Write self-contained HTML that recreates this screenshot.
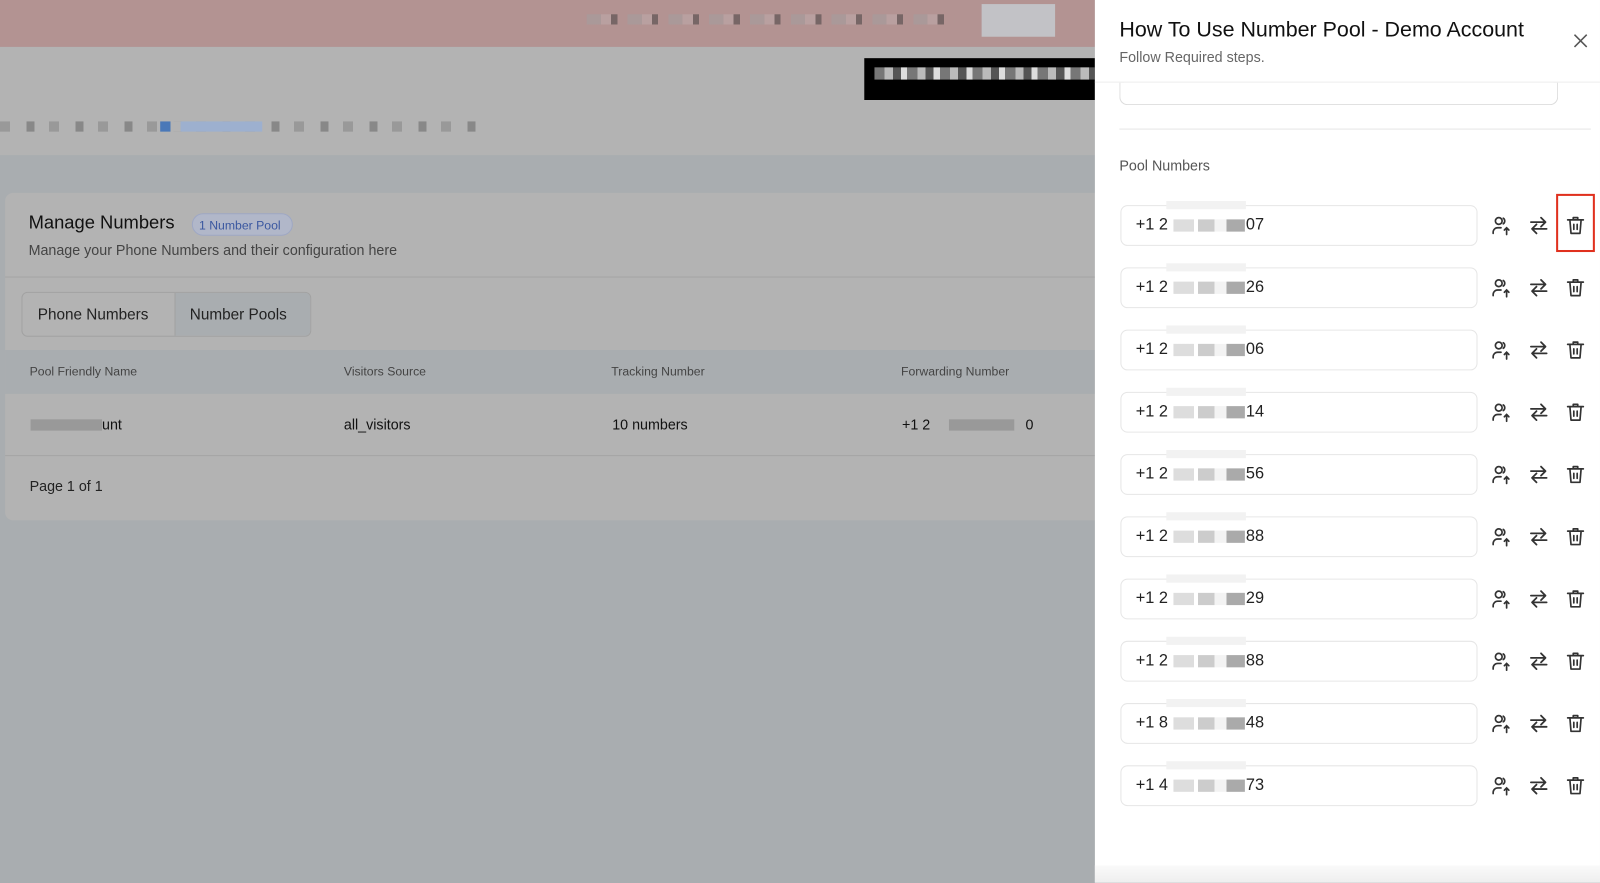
<!DOCTYPE html>
<html><head><meta charset="utf-8"><style>
*{margin:0;padding:0;box-sizing:border-box}
html,body{width:1600px;height:883px;overflow:hidden}
body{position:relative;font-family:"Liberation Sans",sans-serif;background:#a9adb0}
#w{position:absolute;left:0;top:0;width:1568px;height:865px;transform:scale(1.0204);transform-origin:0 0;overflow:hidden}
.a{position:absolute}
.top{left:0;top:0;width:1073px;height:46px;background:#b39392}
.hdr{left:0;top:46px;width:1073px;height:106px;background:#b3b3b3}
.card{left:5px;top:189px;width:1068px;height:321px;background:#b3b3b3;border-radius:8px 0 0 8px}
.panel{left:1073px;top:0;width:527px;height:900px;background:#fff}
.row{position:absolute;left:1098px;width:350px;height:40px;border:1px solid #e6e6e6;border-radius:7px;background:#fff;font-size:16px;color:#222;padding:10px 0 0 14px}
.ic{position:absolute}
.blk{position:absolute;background:#ccc}
</style></head><body><div id="w">
<div class="a top"></div>
<div class="a" style="left:962px;top:4px;width:72px;height:32px;background:#c2c2c6"></div>
<div class="a" style="left:575px;top:14px;width:360px;height:10px;background:repeating-linear-gradient(90deg,#a99 0 14px,#b9a0a0 14px 24px,#766 24px 30px,#b39392 30px 40px)"></div>
<div class="a hdr"></div>
<div class="a" style="left:847px;top:57px;width:226px;height:41px;background:#000"></div>
<div class="a" style="left:857px;top:66px;width:216px;height:12px;background:repeating-linear-gradient(90deg,#777 0 10px,#bbb 10px 18px,#555 18px 26px,#ddd 26px 32px)"></div>
<div class="a" style="left:0;top:119px;width:470px;height:10px;background:repeating-linear-gradient(90deg,#999 0 10px,#b3b3b3 10px 26px,#888 26px 34px,#b3b3b3 34px 48px)"></div>
<div class="a" style="left:157px;top:119px;width:100px;height:10px;background:linear-gradient(90deg,#4a78b8 0 10px,#b3b3b3 10px 20px,#9db0cf 20px)"></div>
<div class="a card"></div>
<div class="a" style="left:28px;top:208px;font-size:18px;color:#111">Manage Numbers</div>
<div class="a" style="left:188px;top:209px;width:99px;height:22px;border:1px solid #9ea7c4;border-radius:11px;background:#b1b7c9;font-size:12px;color:#3a57a0;padding:4px 0 0 6px">1 Number Pool</div>
<div class="a" style="left:28px;top:237px;font-size:14px;color:#444">Manage your Phone Numbers and their configuration here</div>
<div class="a" style="left:5px;top:271px;width:1068px;height:1px;background:#a5a5a5"></div>
<div class="a" style="left:21px;top:286px;width:284px;height:44px;border:1px solid #a2a2a2;border-radius:6px;background:#b3b3b3;overflow:hidden">
<div class="a" style="left:149px;top:0;width:135px;height:44px;background:#a9adb0;border-left:1px solid #a2a2a2"></div>
<div class="a" style="left:15px;top:13px;font-size:15px;color:#222">Phone Numbers</div>
<div class="a" style="left:164px;top:13px;font-size:15px;color:#222">Number Pools</div></div>
<div class="a" style="left:5px;top:343px;width:1068px;height:43px;background:#a9adb0"></div>
<div class="a" style="top:357px;left:29px;font-size:12px;color:#444">Pool Friendly Name</div>
<div class="a" style="top:357px;left:337px;font-size:12px;color:#444">Visitors Source</div>
<div class="a" style="top:357px;left:599px;font-size:12px;color:#444">Tracking Number</div>
<div class="a" style="top:357px;left:883px;font-size:12px;color:#444">Forwarding Number</div>
<div class="a" style="left:30px;top:411px;width:70px;height:11px;background:#999"></div>
<div class="a" style="top:408px;left:100px;font-size:14px;color:#111">unt</div>
<div class="a" style="top:408px;left:337px;font-size:14px;color:#111">all_visitors</div>
<div class="a" style="top:408px;left:600px;font-size:14px;color:#111">10 numbers</div>
<div class="a" style="top:408px;left:884px;font-size:14px;color:#111">+1 2</div>
<div class="a" style="top:408px;left:1005px;font-size:14px;color:#111">0</div>
<div class="a" style="left:930px;top:411px;width:64px;height:11px;background:#999"></div>
<div class="a" style="left:5px;top:446px;width:1068px;height:1px;background:#a5a5a5"></div>
<div class="a" style="top:468px;left:29px;font-size:14px;color:#222">Page 1 of 1</div>

<div class="a panel"></div>
<div class="a" style="left:1097px;top:18px;font-size:21px;color:#111">How To Use Number Pool - Demo Account</div>
<div class="a" style="left:1097px;top:48px;font-size:14px;color:#666">Follow Required steps.</div>
<svg class="ic" style="left:1541px;top:32px" width="16" height="16" viewBox="0 0 16 16"><path d="M2 2L14 14M14 2L2 14" stroke="#555" stroke-width="1.5"/></svg>
<div class="a" style="left:1073px;top:80px;width:527px;height:1px;background:#eee"></div>
<div class="a" style="left:1097px;top:81px;width:430px;height:22px;border:1px solid #ddd;border-top:none;border-radius:0 0 8px 8px"></div>
<div class="a" style="left:1097px;top:126px;width:462px;height:1px;background:#e5e5e5"></div>
<div class="a" style="left:1097px;top:154px;font-size:14px;color:#555">Pool Numbers</div>
<div class="a" style="left:1525px;top:190px;width:38px;height:57px;border:2px solid #e0301e"></div>
<div id="rows"></div>
<div class="a" style="left:1073px;top:848px;width:527px;height:20px;background:linear-gradient(#fafafa,#ececec)"></div>
</div>
<script>
var n=[["+1 2","07"],["+1 2","26"],["+1 2","06"],["+1 2","14"],["+1 2","56"],["+1 2","88"],["+1 2","29"],["+1 2","88"],["+1 8","48"],["+1 4","73"]];
var h="";
for(var i=0;i<10;i++){var y=201+i*61;
h+='<div class="row" style="top:'+y+'px">'+n[i][0]+'<span style="position:absolute;left:122px">'+n[i][1]+'</span></div>';
h+='<div class="blk" style="left:1143px;top:'+(y-4)+'px;width:78px;height:8px;background:#f2f2f2"></div>';
h+='<div class="blk" style="left:1150px;top:'+(y+14)+'px;width:70px;height:12px;background:linear-gradient(90deg,#ddd 0 20px,#fff 20px 24px,#ccc 24px 40px,#f3f3f3 40px 52px,#aaa 52px)"></div>';
var c=y+20;
h+='<svg class="ic" style="left:1460px;top:'+(c-11)+'px" width="22" height="22" viewBox="0 0 20 20" fill="none" stroke="#333" stroke-width="1.5" stroke-linecap="round"><circle cx="8" cy="6" r="3"/><path d="M12 3.5a3 3 0 0 1 0 5"/><path d="M3 17v-1a4 4 0 0 1 4-4h3"/><path d="M15 18v-6M13 14l2-2 2 2"/></svg>';
h+='<svg class="ic" style="left:1497px;top:'+(c-11)+'px" width="22" height="22" viewBox="0 0 20 20" fill="none" stroke="#333" stroke-width="1.6" stroke-linecap="round" stroke-linejoin="round"><path d="M3 7h13M12 3l4 4-4 4M17 13H4M8 9l-4 4 4 4"/></svg>';
h+='<svg class="ic" style="left:1533px;top:'+(c-11)+'px" width="22" height="22" viewBox="0 0 20 20" fill="none" stroke="#333" stroke-width="1.5" stroke-linecap="round" stroke-linejoin="round"><path d="M3 5h14M8 5V3h4v2M5 5l1 12h8l1-12M8.5 9v4.5M11.5 9v4.5"/></svg>';}
document.getElementById("rows").innerHTML=h;
</script>
</body></html>
